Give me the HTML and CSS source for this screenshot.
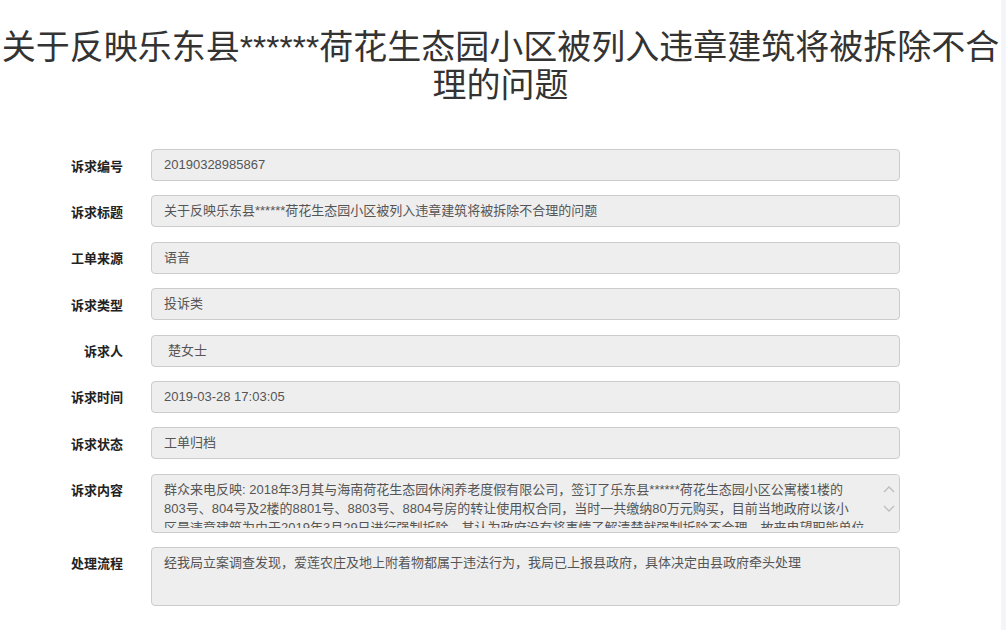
FILE: index.html
```html
<!DOCTYPE html>
<html lang="zh-CN">
<head>
<meta charset="UTF-8">
<title>诉求详情</title>
<link rel="stylesheet" href="styles.css">
</head>
<body>
<div class="page">
  <h1 class="title">关于反映乐东县******荷花生态园小区被列入违章建筑将被拆除不合<br>理的问题</h1>

  <div class="form">
    <div class="row">
      <label class="lbl">诉求编号</label>
      <div class="field">20190328985867</div>
    </div>
    <div class="row">
      <label class="lbl">诉求标题</label>
      <div class="field">关于反映乐东县******荷花生态园小区被列入违章建筑将被拆除不合理的问题</div>
    </div>
    <div class="row">
      <label class="lbl">工单来源</label>
      <div class="field">语音</div>
    </div>
    <div class="row">
      <label class="lbl">诉求类型</label>
      <div class="field">投诉类</div>
    </div>
    <div class="row">
      <label class="lbl lbl-short">诉求人</label>
      <div class="field field-indent">楚女士</div>
    </div>
    <div class="row">
      <label class="lbl">诉求时间</label>
      <div class="field">2019-03-28 17:03:05</div>
    </div>
    <div class="row">
      <label class="lbl">诉求状态</label>
      <div class="field">工单归档</div>
    </div>
    <div class="row">
      <label class="lbl lbl-top">诉求内容</label>
      <div class="field area">
        <div class="area-text">
          <span class="ln">群众来电反映: 2018年3月其与海南荷花生态园休闲养老度假有限公司，签订了乐东县******荷花生态园小区公寓楼1楼的</span>
          <span class="ln">803号、804号及2楼的8801号、8803号、8804号房的转让使用权合同，当时一共缴纳80万元购买，目前当地政府以该小</span>
          <span class="ln">区是违章建筑为由于2019年3月29日进行强制拆除，其认为政府没有将事情了解清楚就强制拆除不合理，故来电望职能单位</span>
        </div>
        <div class="sbar">
          <svg width="12" height="8" viewBox="0 0 12 8"><path d="M1 7 L6 2 L11 7" fill="none" stroke="#bdbdbd" stroke-width="1.3"/></svg>
          <svg width="12" height="8" viewBox="0 0 12 8"><path d="M1 1 L6 6 L11 1" fill="none" stroke="#bdbdbd" stroke-width="1.3"/></svg>
        </div>
      </div>
    </div>
    <div class="row">
      <label class="lbl lbl-top">处理流程</label>
      <div class="field area">
        <div class="area-text">经我局立案调查发现，爱莲农庄及地上附着物都属于违法行为，我局已上报县政府，具体决定由县政府牵头处理</div>
      </div>
    </div>
  </div>
</div>
</body>
</html>
```

FILE: styles.css
```css
html {
    background: #f3f5fb;
}
body {
    margin: 0;
    width: 1001px;
    min-height: 630px;
    background: #fff;
    font-family: "Liberation Sans", Arial, "Noto Sans CJK SC", sans-serif;
    font-size: 13px;
    color: #333;
}
.title {
    margin: 28px 0 0 0;
    font-size: 34px;
    font-weight: normal;
    line-height: 38px;
    text-align: center;
    color: #333;
    white-space: nowrap;
}
.form {
    margin-top: 45px;
    display: flex;
    flex-direction: column;
    gap: 14.4px;
}
.row {
    display: flex;
    align-items: center;
}
.lbl {
    width: 123px;
    text-align: right;
    font-weight: bold;
    color: #222;
    margin-right: 28px;
    flex: none;
}
.lbl-top {
    align-self: flex-start;
    padding-top: 6px;
}
.field {
    width: 749px;
    box-sizing: border-box;
    height: 32px;
    line-height: 30px;
    padding: 0 12px;
    background: #eee;
    border: 1px solid #ccc;
    border-radius: 4px;
    color: #555;
    white-space: nowrap;
    overflow: hidden;
}
.field-indent {
    padding-left: 16px;
}
.area {
    height: 59px;
    line-height: 19px;
    padding: 5px 12px;
    position: relative;
    white-space: normal;
}
.area-text {
    height: 48px;
    overflow: hidden;
}
.ln {
    display: block;
    white-space: nowrap;
}
.sbar {
    position: absolute;
    right: 0;
    top: 0;
    width: 20px;
    height: 100%;
    background: #eee;
    display: flex;
    flex-direction: column;
    align-items: center;
    padding-top: 10px;
    gap: 12px;
    box-sizing: border-box;
}
```
